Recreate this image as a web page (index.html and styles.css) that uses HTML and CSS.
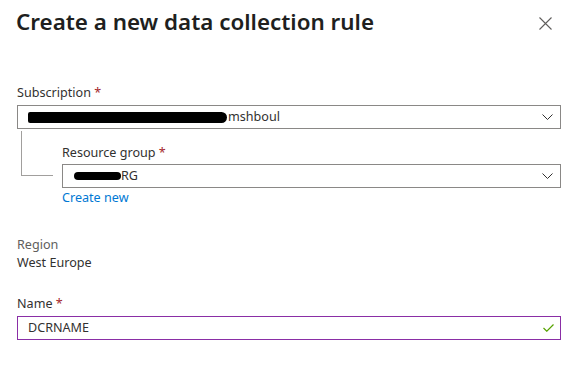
FILE: index.html
```html
<!DOCTYPE html>
<html>
<head>
	<meta name='viewport' content='width=device-width, initial-scale=1'>
	<title>Create a new data collection rule</title>
	<link rel="stylesheet" href="styles.css">
</head>
<body>
	<div class='panel-header'>
		<h1 class='panel-title'>Create a new data collection rule</h1>
		<button class='close-button' type='button' aria-label='Close'>
			<svg width='13' height='13' viewBox='0 0 13 13'><path d='M0.5 0.5 L12.5 12.5 M12.5 0.5 L0.5 12.5' stroke='#605e5c' stroke-width='1.1' fill='none'/></svg>
		</button>
	</div>
	<div class='form'>
		<div class='field'>
			<div class='label'>Subscription <span class='required'>*</span></div>
			<div class='select'>
				<span class='value'><span class='redact redact-sub'></span>mshboul</span>
				<svg class='chevron' width='11' height='6' viewBox='0 0 11 6'><path d='M0.5 0.5 L5.5 5.5 L10.5 0.5' stroke='#323130' stroke-width='1' fill='none'/></svg>
			</div>
		</div>
		<div class='tree-row'>
			<div class='tree-branch'></div>
			<div class='field nested'>
				<div class='label'>Resource group <span class='required'>*</span></div>
				<div class='select'>
					<span class='value'><span class='redact redact-rg'></span>RG</span>
					<svg class='chevron' width='11' height='6' viewBox='0 0 11 6'><path d='M0.5 0.5 L5.5 5.5 L10.5 0.5' stroke='#323130' stroke-width='1' fill='none'/></svg>
				</div>
				<a class='link' href='#'>Create new</a>
			</div>
		</div>
		<div class='field region'>
			<div class='label muted'>Region</div>
			<div class='static'>West Europe</div>
		</div>
		<div class='field name'>
			<div class='label'>Name <span class='required'>*</span></div>
			<div class='textbox dirty'>
				<span class='value'>DCRNAME</span>
				<svg class='check' width='11' height='8' viewBox='0 0 11 8'><path d='M0.5 4 L3.8 7.2 L10.5 0.5' stroke='#57a300' stroke-width='1.2' fill='none'/></svg>
			</div>
		</div>
	</div>
</body>
</html>
```

FILE: styles.css
```css
* {
	box-sizing: border-box;
}

body {
	margin: 0;
	font-family: 'Noto Sans', 'Open Sans', sans-serif;
	font-size: 12.6px;
	color: #323130;
	background: #fff;
}

.panel-header {
	display: flex;
	justify-content: space-between;
	align-items: flex-start;
	padding: 6px 27px 0 16px;
	height: 84px;
}

.panel-title {
	margin: 0;
	font-size: 22.4px;
	font-weight: 600;
	line-height: 32px;
	color: #201f1e;
}

.close-button {
	margin-top: 11px;
	padding: 0;
	border: none;
	background: none;
	width: 13px;
	height: 13px;
	display: flex;
}

.form {
	padding: 0 18px 0 17px;
}

.label {
	line-height: 18px;
	margin-bottom: 3px;
}

.label.muted {
	color: #605e5c;
}

.required {
	color: #a4262c;
}

.select, .textbox {
	display: flex;
	align-items: center;
	justify-content: space-between;
	height: 24px;
	border: 1px solid #8a8886;
	padding: 0 7px 0 10px;
}

.value {
	display: flex;
	align-items: center;
	line-height: 20px;
}

.redact {
	display: inline-block;
	background: #000;
	border-radius: 6px;
}

.redact-sub {
	width: 199px;
	height: 11px;
	margin-right: 1px;
	border-radius: 3px 8px 8px 3px;
}

.redact-rg {
	width: 47px;
	height: 8px;
	margin-left: 1px;
}

.tree-row {
	display: flex;
	align-items: flex-start;
}

.tree-branch {
	width: 32px;
	height: 45px;
	margin: 2px 0 0 4px;
	border-left: 1px solid #a19f9d;
	border-bottom: 1px solid #a19f9d;
	flex: none;
}

.field.nested {
	flex: 1;
	margin: 15px 0 0 9px;
}

.field.nested .label {
	margin-bottom: 2px;
}

.link {
	display: block;
	color: #0078d4;
	text-decoration: none;
	line-height: 18px;
	margin-top: 1px;
}

.field.region {
	margin-top: 29px;
}

.field.region .label {
	margin-bottom: 0;
}

.static {
	line-height: 18px;
}

.field.name {
	margin-top: 23px;
}

.textbox.dirty {
	border-color: #8a2ea6;
	padding-right: 6px;
}
```
